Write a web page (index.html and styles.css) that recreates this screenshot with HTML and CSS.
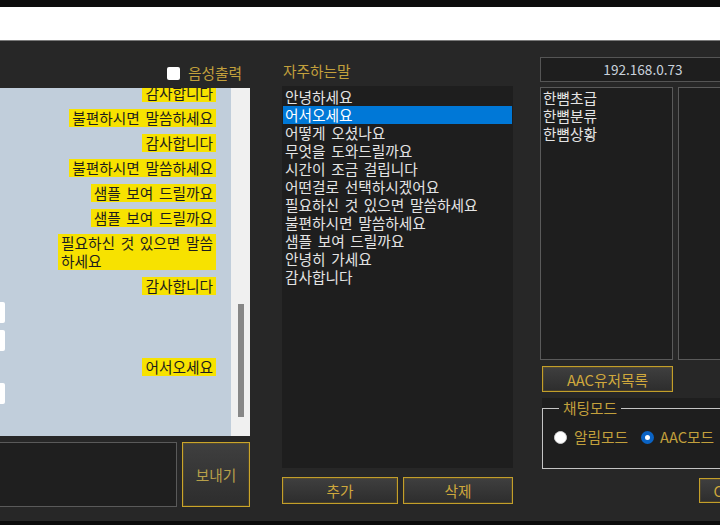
FILE: index.html
```html
<!DOCTYPE html>
<html lang="ko">
<head>
<meta charset="utf-8">
<title>채팅</title>
<link rel="stylesheet" href="styles.css">
</head>
<body>
<div class="topbar"></div>
<div class="titlebar"></div>
<main class="app">
  <section class="chat-col">
    <div class="voice-row">
      <label class="check"><span class="box"></span><span class="gold">음성출력</span></label>
    </div>
    <div class="chat">
      <div class="messages">
        <div class="msg me first">감사합니다</div>
        <div class="msg me">불편하시면 말씀하세요</div>
        <div class="msg me">감사합니다</div>
        <div class="msg me">불편하시면 말씀하세요</div>
        <div class="msg me">샘플 보여 드릴까요</div>
        <div class="msg me">샘플 보여 드릴까요</div>
        <div class="msg me">필요하신 것 있으면 말씀<br>하세요</div>
        <div class="msg me">감사합니다</div>
        <div class="msg other"></div>
        <div class="msg other"></div>
        <div class="msg me">어서오세요</div>
        <div class="msg other"></div>
      </div>
      <div class="scrollbar"><div class="thumb"></div></div>
    </div>
    <div class="input-row">
      <div class="input"></div>
      <button class="btn send">보내기</button>
    </div>
  </section>

  <section class="phrase-col">
    <div class="label gold">자주하는말</div>
    <ul class="list phrases">
      <li>안녕하세요</li>
      <li class="selected">어서오세요</li>
      <li>어떻게 오셨나요</li>
      <li>무엇을 도와드릴까요</li>
      <li>시간이 조금 걸립니다</li>
      <li>어떤걸로 선택하시겠어요</li>
      <li>필요하신 것 있으면 말씀하세요</li>
      <li>불편하시면 말씀하세요</li>
      <li>샘플 보여 드릴까요</li>
      <li>안녕히 가세요</li>
      <li>감사합니다</li>
    </ul>
    <div class="btn-row">
      <button class="btn add">추가</button>
      <button class="btn del">삭제</button>
    </div>
  </section>

  <section class="side-col">
    <div class="ip">192.168.0.73</div>
    <div class="lists">
      <ul class="list box-list">
        <li>한뼘초급</li>
        <li>한뼘분류</li>
        <li>한뼘상황</li>
      </ul>
      <ul class="list box-list wide"></ul>
    </div>
    <button class="btn aac">AAC유저목록</button>
    <div class="group">
      <fieldset class="mode">
        <legend class="gold">채팅모드</legend>
        <div class="radios">
          <span class="radio"></span><span class="gold radio-label">알림모드</span>
          <span class="radio on"></span><span class="gold radio-label">AAC모드</span>
        </div>
      </fieldset>
    </div>
    <div class="bottom-row"><button class="btn connect">Connect</button></div>
  </section>
</main>
<div class="bottombar"></div>
</body>
</html>
```
FILE: styles.css
```css
* { box-sizing: border-box; }

body {
  margin: 0;
  width: 720px;
  height: 525px;
  overflow: hidden;
  background: #0b0b0b;
  font-family: "Noto Sans CJK KR", "Noto Sans", sans-serif;
  font-size: 14.7px;
  word-spacing: 1.5px;
}

.topbar { height: 7px; background: #0d0d0d; }
.titlebar { height: 34px; background: #ffffff; border-bottom: 1px solid #7a7a7a; }
.bottombar { height: 4px; background: #0b0b0b; }

.app {
  height: 480px;
  background: #272727;
  display: flex;
  overflow: hidden;
}

.gold { color: #c2a03c; }

/* ---------- chat column ---------- */
.chat-col {
  flex: 0 0 350px;
  margin-left: -100px;
  padding-top: 22px;
  display: flex;
  flex-direction: column;
}

.voice-row {
  height: 20px;
  margin-bottom: 5px;
  padding-right: 8px;
  display: flex;
  justify-content: flex-end;
}

.check {
  display: flex;
  align-items: center;
  gap: 8px;
  line-height: 20px;
}

.check .box {
  width: 13px;
  height: 13px;
  background: #ffffff;
  border-radius: 2px;
}

.chat {
  height: 348px;
  display: flex;
  background: #c1cedb;
}

.messages {
  flex: 1;
  overflow: hidden;
  padding-right: 15px;
  display: flex;
  flex-direction: column;
  align-items: flex-end;
  gap: 7px;
}

.msg {
  flex: none;
  line-height: 18px;
  padding: 0 3px;
  background: #f7e200;
  color: #1d1d1d;
  white-space: nowrap;
}

.msg.first { margin-top: -4px; }

.msg.other {
  align-self: flex-start;
  margin-left: 10px;
  width: 95px;
  height: 21px;
  background: #ffffff;
  border-radius: 2px;
}

.scrollbar {
  flex: 0 0 19px;
  background: #f0f0f0;
  padding-top: 216px;
}

.thumb {
  width: 6px;
  height: 113px;
  margin-left: 7px;
  background: #878787;
}

.input-row {
  margin-top: 6px;
  height: 65px;
  display: flex;
  gap: 5px;
}

.input {
  width: 277px;
  background: #1f1f1f;
  border: 1px solid #5a5a5a;
}

/* ---------- buttons ---------- */
.btn {
  font-family: inherit;
  font-size: 14.7px;
  color: #cfa83c;
  background: linear-gradient(#3f3f3f, #2d2d2d);
  border: 1px solid #c39f2a;
  box-shadow: inset 0 0 0 1px rgba(120, 95, 25, 0.35);
  padding: 0;
  margin: 0;
  white-space: nowrap;
}

.send {
  width: 68px;
  color: #b7a04a;
  border-color: #caa52a;
}

/* ---------- phrase column ---------- */
.phrase-col {
  flex: 0 0 231px;
  margin-left: 32px;
  padding-top: 20px;
  display: flex;
  flex-direction: column;
}

.label {
  height: 20px;
  line-height: 20px;
  margin-bottom: 5px;
  padding-left: 1px;
}

.list {
  margin: 0;
  list-style: none;
  background: #1e1e1e;
  color: #e4e4e4;
}

.list li {
  line-height: 18px;
  white-space: nowrap;
}

.phrases {
  height: 382px;
  padding: 2px 1px;
}

.phrases li { padding-left: 2px; }

.phrases li.selected {
  background: #0078d7;
  color: #ffffff;
}

.btn-row {
  margin-top: 9px;
  height: 27px;
  display: flex;
  gap: 5px;
}

.add { width: 116px; }
.del { width: 110px; }

/* ---------- side column ---------- */
.side-col {
  flex: 0 0 220px;
  margin-left: 27px;
  padding-top: 16px;
  display: flex;
  flex-direction: column;
}

.ip {
  width: 206px;
  height: 25px;
  line-height: 23px;
  font-size: 13.6px;
  text-align: center;
  color: #c9d2dc;
  background: #1e1e1e;
  border: 1px solid #555555;
  word-spacing: 0;
}

.lists {
  margin-top: 5px;
  height: 273px;
  display: flex;
  gap: 5px;
}

.box-list {
  width: 133px;
  height: 100%;
  padding: 1px 2px;
  border: 1px solid #5a5a5a;
}

.box-list.wide { width: 100px; }

.aac {
  margin-top: 6px;
  margin-left: 2px;
  width: 131px;
  height: 26px;
}

.group {
  margin-top: 6px;
  margin-left: 2px;
  height: 71px;
  background: #1e1e1e;
}

.mode {
  margin: 0;
  height: 71px;
  padding: 0 0 0 11px;
  border: 1px solid #c4c4c4;
}

.mode legend {
  margin-left: 5px;
  padding: 0 4px;
  line-height: 20px;
}

.radios {
  padding-top: 9px;
  height: 29px;
  display: flex;
  align-items: center;
}

.radio {
  flex: none;
  width: 13px;
  height: 13px;
  border-radius: 50%;
  background: #ffffff;
  border: 1px solid #d0d0d0;
}

.radio.on {
  margin-left: 13px;
  background: #ffffff;
  border: 4px solid #0a63c4;
}

.radio-label { margin-left: 7px; line-height: 20px; white-space: nowrap; }
.radio.on + .radio-label { margin-left: 6px; }

.bottom-row {
  margin-top: 9px;
  height: 25px;
  display: flex;
}

.connect {
  margin-left: 159px;
  width: 86px;
  flex: none;
}
```
